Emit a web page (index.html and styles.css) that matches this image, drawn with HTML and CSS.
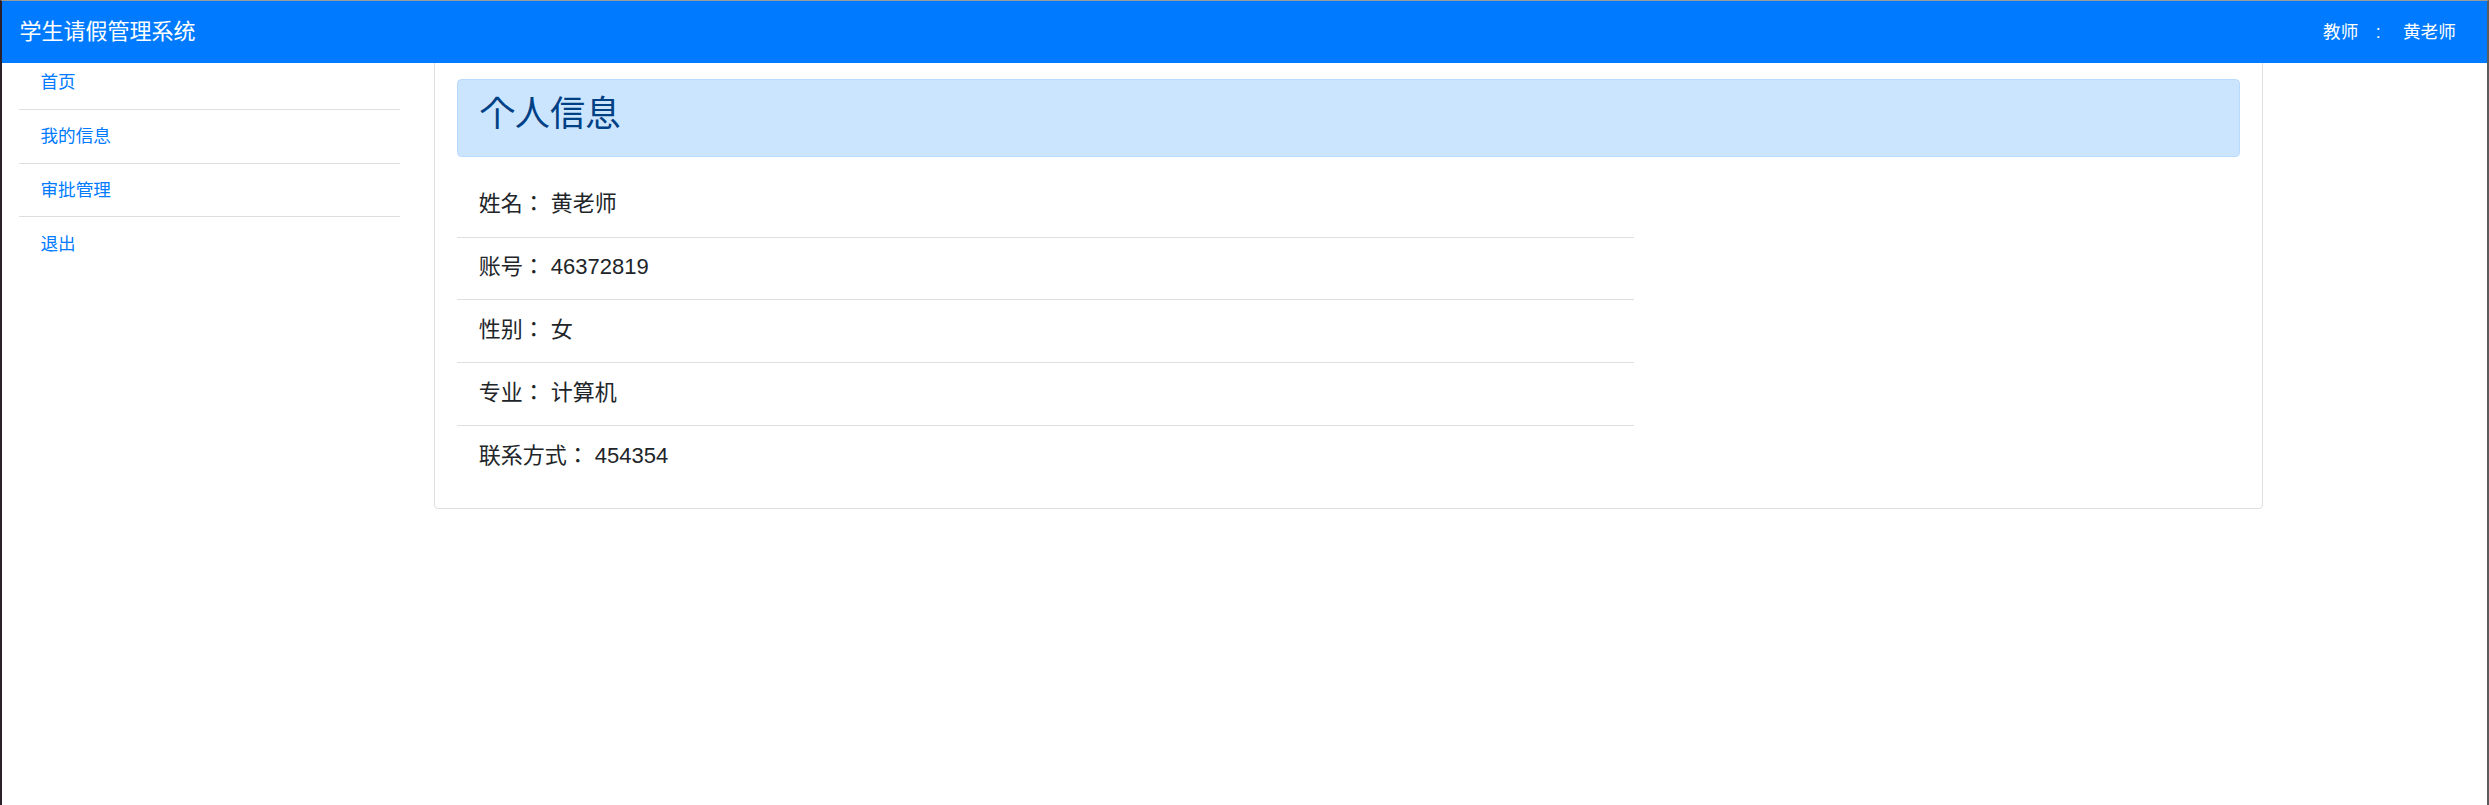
FILE: index.html
```html
<!DOCTYPE html>
<html>
<head>
<meta charset="utf-8">
<title>学生请假管理系统</title>
<link rel="stylesheet" href="styles.css">
</head>
<body>
<div class="window">
  <header class="navbar">
    <a class="brand" href="#">学生请假管理系统</a>
    <div class="user">
      <span class="role">教师</span>
      <span class="sep">:</span>
      <span class="uname">黄老师</span>
    </div>
  </header>
  <div class="layout">
    <aside class="sidebar">
      <ul class="menu">
        <li><a href="#">首页</a></li>
        <li><a href="#">我的信息</a></li>
        <li><a href="#">审批管理</a></li>
        <li><a href="#">退出</a></li>
      </ul>
    </aside>
    <main class="main">
      <section class="card">
        <div class="alert">
          <h2 class="alert-title">个人信息</h2>
        </div>
        <ul class="info">
          <li>姓名： 黄老师</li>
          <li>账号： 46372819</li>
          <li>性别： 女</li>
          <li>专业： 计算机</li>
          <li>联系方式： 454354</li>
        </ul>
      </section>
    </main>
  </div>
</div>
</body>
</html>
```

FILE: styles.css
```css
html, body {
  margin: 0;
  padding: 0;
  background: #ffffff;
}

body {
  font-family: "Liberation Sans", "Noto Sans CJK JP", "Noto Sans CJK SC", sans-serif;
  color: #212529;
}

.window {
  position: relative;
  box-sizing: border-box;
  min-height: 100vh;
  border-top: 1px solid #9a9a9a;
  border-left: 2px solid #2b1f28;
  border-right: 2px solid #5c5c5c;
  background: #ffffff;
}

/* fixed-top navbar overlays the top of the content */
.navbar {
  position: absolute;
  top: 0;
  left: 0;
  right: 0;
  z-index: 2;
  height: 61.7px;
  box-sizing: border-box;
  background: #007bff;
  display: flex;
  align-items: center;
  justify-content: space-between;
  padding: 0 31.2px 0 17.6px;
}

.brand {
  color: #ffffff;
  font-size: 22px;
  line-height: 33px;
  text-decoration: none;
}

.user {
  display: flex;
  align-items: center;
  color: #ffffff;
  font-size: 17.6px;
  line-height: 26.4px;
}

.sep {
  margin: 0 22.3px 0 17.6px;
}

.layout {
  display: flex;
  padding-top: 55px;
}

.sidebar {
  flex: 0 0 16.6667%;
  box-sizing: border-box;
  padding: 0 16.5px;
}

.menu {
  list-style: none;
  margin: 0;
  padding: 0;
}

.menu li a {
  display: block;
  padding: 13.2px 22px;
  font-size: 17.6px;
  line-height: 26.4px;
  color: #007bff;
  text-decoration: none;
  border-bottom: 1px solid rgba(0, 0, 0, 0.125);
}

.menu li:last-child a {
  border-bottom: 0;
}

.main {
  flex: 0 0 75%;
  box-sizing: border-box;
  padding: 0 16.5px 0 17.5px;
}

.card {
  border: 1px solid rgba(0, 0, 0, 0.125);
  border-radius: 4.4px;
  padding: 22px 22px 20px;
  background: #ffffff;
}

.alert {
  background: #cce5ff;
  border: 1px solid #b8daff;
  border-radius: 4.4px;
  padding: 13.2px 22px;
  margin-bottom: 17.6px;
}

.alert-title {
  margin: 0 0 7.7px;
  font-size: 35.2px;
  line-height: 1.2;
  font-weight: 400;
  color: #004085;
}

.info {
  list-style: none;
  margin: 0;
  padding: 0;
  width: 66%;
}

.info li {
  padding: 12.5px 22px 16.3px;
  font-size: 22px;
  line-height: 33px;
  color: #212529;
  border-bottom: 1px solid rgba(0, 0, 0, 0.125);
}

.info li:last-child {
  border-bottom: 0;
}
```
